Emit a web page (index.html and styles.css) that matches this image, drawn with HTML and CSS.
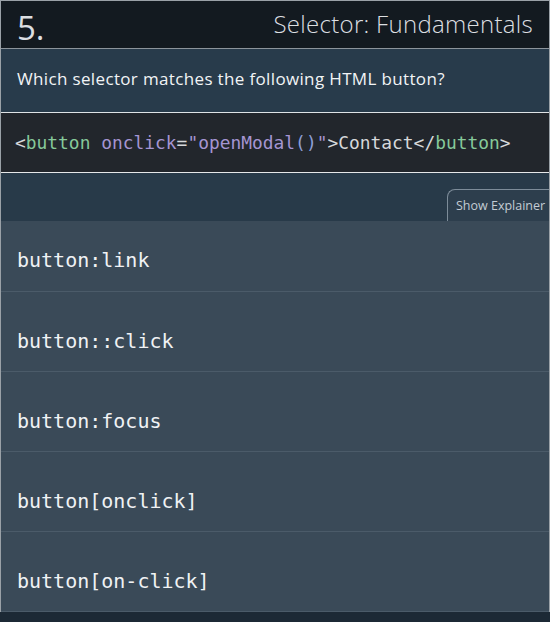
FILE: index.html
```html
<!DOCTYPE html>
<html lang="en">
<head>
<meta charset="utf-8">
<title>Selector: Fundamentals</title>
<link rel="stylesheet" href="styles.css">
</head>
<body>
<div class="quiz">
  <header class="quiz-header">
    <span class="quiz-number">5.</span>
    <span class="quiz-topic">Selector: Fundamentals</span>
  </header>
  <div class="quiz-question">Which selector matches the following HTML button?</div>
  <pre class="quiz-code"><span class="p">&lt;</span><span class="tag">button</span> <span class="attr">onclick</span><span class="p">=</span><span class="str">"openModal</span><span class="paren">()</span><span class="str">"</span><span class="p">&gt;Contact&lt;/</span><span class="tag">button</span><span class="p">&gt;</span></pre>
  <div class="quiz-toolbar">
    <button class="explainer-tab" type="button">Show Explainer</button>
  </div>
  <ul class="answers">
    <li class="answer answer-first">button:link</li>
    <li class="answer">button::click</li>
    <li class="answer">button:focus</li>
    <li class="answer">button[onclick]</li>
    <li class="answer">button[on-click]</li>
  </ul>
</div>
</body>
</html>
```
FILE: styles.css
```css
html, body {
  margin: 0;
  padding: 0;
  background: #1c2935;
}

.quiz {
  width: 548px;
  border: 1px solid #9aa1a7;
  border-bottom: none;
  font-family: "Open Sans", "Liberation Sans", sans-serif;
  color: #e8ecef;
}

.quiz-header {
  display: flex;
  justify-content: space-between;
  align-items: flex-start;
  height: 48px;
  box-sizing: border-box;
  padding: 7px 16px 0 16px;
  background: #131a20;
  border-bottom: 1px solid #8c949b;
}

.quiz-number {
  font-size: 33px;
  line-height: 40px;
  color: #dcdfe2;
  font-weight: 400;
}

.quiz-topic {
  font-size: 24px;
  line-height: 32px;
  color: #dcdfe2;
  font-weight: 300;
  letter-spacing: 0.3px;
}

.quiz-question {
  height: 64px;
  box-sizing: border-box;
  padding: 17px 16px 0 16px;
  background: #283b4b;
  border-bottom: 1px solid #dfe3e6;
  font-size: 17px;
  line-height: 26px;
  letter-spacing: 0.35px;
  color: #f2f4f6;
}

.quiz-code {
  margin: 0;
  height: 60px;
  box-sizing: border-box;
  padding: 18px 14px 0 14px;
  background: #22262c;
  border-bottom: 1px solid #e6e8ea;
  font-family: "DejaVu Sans Mono", monospace;
  font-size: 17.9px;
  line-height: 24px;
  color: #d6d8da;
}

.quiz-code .tag { color: #86c99a; }
.quiz-code .attr { color: #a595d2; }
.quiz-code .str { color: #a595d2; }
.quiz-code .paren { color: #8f9ed6; }
.quiz-code .p { color: #d6d8da; }

.quiz-toolbar {
  display: flex;
  justify-content: flex-end;
  align-items: flex-end;
  height: 48px;
  background: #283a49;
}

.explainer-tab {
  height: 32px;
  width: 102px;
  box-sizing: border-box;
  padding: 0 0 1px 8px;
  background: #2d3e4d;
  border: 1px solid #7d8c99;
  border-right: none;
  border-bottom: none;
  border-radius: 8px 0 0 0;
  font-family: "Open Sans", "Liberation Sans", sans-serif;
  font-size: 12.5px;
  white-space: nowrap;
  color: #c3ccd3;
  text-align: left;
}

.answers {
  list-style: none;
  margin: 0;
  padding: 0;
  background: #3a4a58;
}

.answer {
  height: 80px;
  box-sizing: border-box;
  padding: 37px 16px 0 16px;
  border-bottom: 1px solid #4b5b69;
  font-family: "DejaVu Sans Mono", monospace;
  font-size: 20px;
  line-height: 24px;
  color: #f0f2f4;
}

.answer-first {
  height: 71px;
  padding-top: 27px;
}
```
